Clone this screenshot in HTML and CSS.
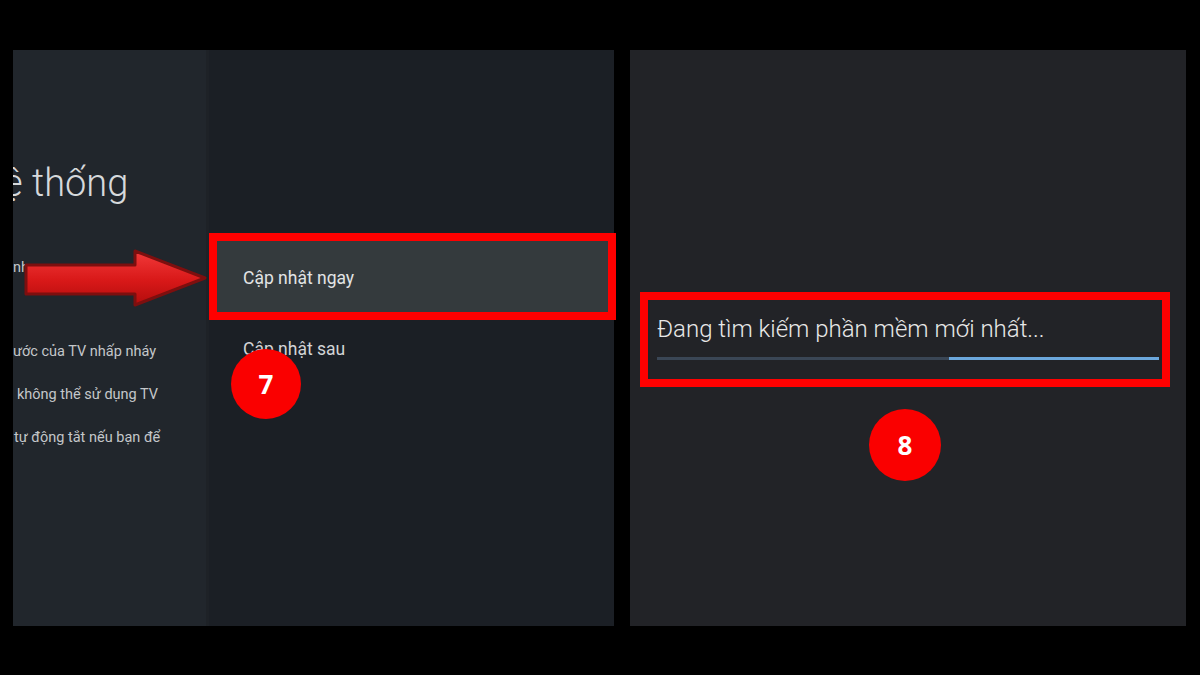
FILE: index.html
```html
<!DOCTYPE html>
<html lang="vi">
<head>
  <meta charset="UTF-8">
  <meta name="viewport" content="width=device-width, initial-scale=1.0">
  <title>Cập nhật phần mềm</title>
  <link rel="stylesheet" href="styles.css">
</head>
<body>
  <div class="stage">
    <section class="panel settings">
      <aside class="side">
        <h1 class="side-title">ệ thống</h1>
        <ul class="side-list">
          <li class="side-first">nh</li>
          <li>ước của TV nhấp nháy</li>
          <li class="indent">không thể sử dụng TV</li>
          <li class="indent-sm">tự động tắt nếu bạn để</li>
        </ul>
      </aside>
      <div class="menu">
        <div class="menu-item focused">Cập nhật ngay</div>
        <div class="menu-item">Cập nhật sau</div>
        <span class="step step-seven">7</span>
      </div>
      <svg class="arrow" width="186" height="58" viewBox="0 0 186 58">
        <defs>
          <linearGradient id="arrowFill" x1="0" y1="0" x2="0" y2="1">
            <stop offset="0" stop-color="#f23a3a"/>
            <stop offset="0.55" stop-color="#d81818"/>
            <stop offset="1" stop-color="#b30d0d"/>
          </linearGradient>
        </defs>
        <path d="M3 16 H112 V2 L182 29 L112 56 V45 H3 Z" fill="url(#arrowFill)" stroke="#7d0f0f" stroke-width="3" stroke-linejoin="round"/>
      </svg>
    </section>

    <section class="panel progress">
      <div class="search">
        <p class="search-text">Đang tìm kiếm phần mềm mới nhất...</p>
        <div class="bar">
          <span class="bar-track"></span>
          <span class="bar-fill"></span>
        </div>
      </div>
      <span class="step">8</span>
    </section>
  </div>
</body>
</html>
```

FILE: styles.css
```css
body {
  margin: 0;
  background-color: #000;
  font-family: Roboto, "Noto Sans", sans-serif;
  width: 1200px;
  height: 675px;
  overflow: hidden;
}
.stage {
  display: flex;
  gap: 16px;
  padding: 50px 0 0 13px;
  height: 576px;
}
.panel {
  height: 576px;
}
.settings {
  position: relative;
  width: 601px;
  display: flex;
  background-color: #1b1f25;
}
.side {
  width: 193px;
  overflow: hidden;
  background-color: #21262c;
  border-right: 3px solid #1e2227;
  padding-top: 113px;
  color: #c4c7ca;
}
.side-title {
  margin: 0 0 43px -10px;
  font-size: 38px;
  font-weight: 300;
  line-height: 40px;
  color: #d6d9dc;
  white-space: nowrap;
}
.side-list {
  list-style: none;
  margin: 0;
  padding: 0;
  font-size: 14.5px;
  line-height: 43px;
  white-space: nowrap;
}
.side-first {
  margin-bottom: 41px;
}
.indent {
  padding-left: 4px;
}
.indent-sm {
  padding-left: 1px;
}
.menu {
  position: relative;
  flex: 1;
  padding-top: 191px;
}
.menu-item {
  height: 71px;
  line-height: 74px;
  margin: 0 6px 0 8px;
  padding-left: 26px;
  font-size: 17.5px;
  color: #d3d5d7;
}
.menu-item.focused {
  background-color: #343a3d;
  outline: 8px solid #ff0000;
  color: #e2e4e5;
}
.arrow {
  position: absolute;
  left: 10px;
  top: 199px;
}
.step {
  width: 72px;
  height: 72px;
  border-radius: 50%;
  background-color: #fa0000;
  color: #fff;
  font-family: "Open Sans", Roboto, sans-serif;
  font-weight: bold;
  font-size: 26px;
  display: flex;
  align-items: center;
  justify-content: center;
}
.step-seven {
  position: absolute;
  left: 22px;
  top: 299px;
  width: 70px;
  height: 70px;
}
.progress {
  width: 556px;
  background-color: #222327;
  display: flex;
  flex-direction: column;
  padding: 242px 16px 0 10px;
  box-sizing: border-box;
}
.search {
  border: 8px solid #ff0000;
  height: 65px;
  padding: 14px 3px 0 9px;
}
.search-text {
  margin: 0 0 13px;
  font-size: 24px;
  font-weight: 300;
  line-height: 30px;
  color: #e8e8e8;
  white-space: nowrap;
}
.bar {
  display: flex;
  height: 3px;
}
.bar-track {
  flex: 292;
  background-color: #3a4655;
}
.bar-fill {
  flex: 210;
  background-color: #6ba7dc;
}
.progress .step {
  align-self: center;
  margin-top: 22px;
}
```
